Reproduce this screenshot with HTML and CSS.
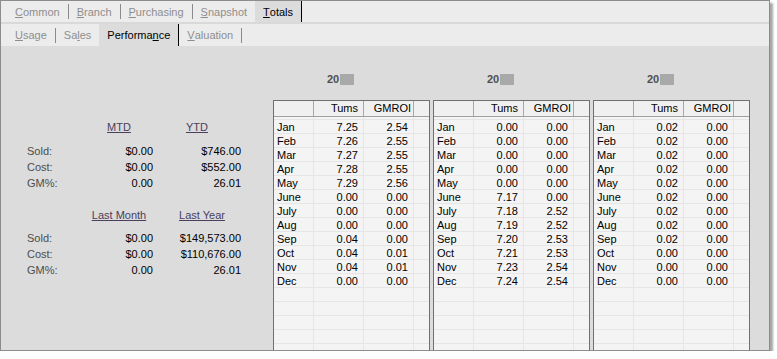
FILE: index.html
```html
<!DOCTYPE html>
<html>

<head>
    <title>Performance Totals</title>
    <meta charset="UTF-8">
    <link rel="stylesheet" href="styles.css">
</head>

<body>
    <div class="window">
        <div class="tabstrip tabstrip-top">
            <span class="tab"><u>C</u>ommon</span><span class="sep"></span>
            <span class="tab"><u>B</u>ranch</span><span class="sep"></span>
            <span class="tab"><u>P</u>urchasing</span><span class="sep"></span>
            <span class="tab"><u>S</u>napshot</span>
            <span class="tab active"><u>T</u>otals</span>
        </div>
        <div class="tabstrip tabstrip-sub">
            <span class="tab"><u>U</u>sage</span><span class="sep"></span>
            <span class="tab">Sa<u>l</u>es</span>
            <span class="tab active">Performa<u>n</u>ce</span>
            <span class="tab"><u>V</u>aluation</span><span class="sep"></span>
        </div>

        <div class="content">
            <div class="summary">
                <div class="stats stats-current">
                    <span></span>
                    <span class="stats-head">MTD</span>
                    <span class="stats-head">YTD</span>
                    <span class="stats-label">Sold:</span><span class="num">$0.00</span><span class="num">$746.00</span>
                    <span class="stats-label">Cost:</span><span class="num">$0.00</span><span class="num">$552.00</span>
                    <span class="stats-label">GM%:</span><span class="num">0.00</span><span class="num">26.01</span>
                </div>
                <div class="stats stats-last">
                    <span></span>
                    <span class="stats-head">Last Month</span>
                    <span class="stats-head head-year">Last Year</span>
                    <span class="stats-label">Sold:</span><span class="num">$0.00</span><span class="num">$149,573.00</span>
                    <span class="stats-label">Cost:</span><span class="num">$0.00</span><span class="num">$110,676.00</span>
                    <span class="stats-label">GM%:</span><span class="num">0.00</span><span class="num">26.01</span>
                </div>
            </div>

            <div class="years">
                <div class="year">
                    <div class="year-label">20<span class="masked"></span></div>
                    <div class="grid">
                        <div class="grid-head">
                            <span></span><span class="num">Tums</span><span class="num head-gmroi">GMROI</span><span></span>
                        </div>
                        <div class="grid-body">
                            <div class="grid-row"><span>Jan</span><span class="num">7.25</span><span class="num">2.54</span></div>
                            <div class="grid-row"><span>Feb</span><span class="num">7.26</span><span class="num">2.55</span></div>
                            <div class="grid-row"><span>Mar</span><span class="num">7.27</span><span class="num">2.55</span></div>
                            <div class="grid-row"><span>Apr</span><span class="num">7.28</span><span class="num">2.55</span></div>
                            <div class="grid-row"><span>May</span><span class="num">7.29</span><span class="num">2.56</span></div>
                            <div class="grid-row"><span>June</span><span class="num">0.00</span><span class="num">0.00</span></div>
                            <div class="grid-row"><span>July</span><span class="num">0.00</span><span class="num">0.00</span></div>
                            <div class="grid-row"><span>Aug</span><span class="num">0.00</span><span class="num">0.00</span></div>
                            <div class="grid-row"><span>Sep</span><span class="num">0.04</span><span class="num">0.00</span></div>
                            <div class="grid-row"><span>Oct</span><span class="num">0.04</span><span class="num">0.01</span></div>
                            <div class="grid-row"><span>Nov</span><span class="num">0.04</span><span class="num">0.01</span></div>
                            <div class="grid-row"><span>Dec</span><span class="num">0.00</span><span class="num">0.00</span></div>
                        </div>
                    </div>
                </div>

                <div class="year">
                    <div class="year-label">20<span class="masked"></span></div>
                    <div class="grid">
                        <div class="grid-head">
                            <span></span><span class="num">Tums</span><span class="num head-gmroi">GMROI</span><span></span>
                        </div>
                        <div class="grid-body">
                            <div class="grid-row"><span>Jan</span><span class="num">0.00</span><span class="num">0.00</span></div>
                            <div class="grid-row"><span>Feb</span><span class="num">0.00</span><span class="num">0.00</span></div>
                            <div class="grid-row"><span>Mar</span><span class="num">0.00</span><span class="num">0.00</span></div>
                            <div class="grid-row"><span>Apr</span><span class="num">0.00</span><span class="num">0.00</span></div>
                            <div class="grid-row"><span>May</span><span class="num">0.00</span><span class="num">0.00</span></div>
                            <div class="grid-row"><span>June</span><span class="num">7.17</span><span class="num">0.00</span></div>
                            <div class="grid-row"><span>July</span><span class="num">7.18</span><span class="num">2.52</span></div>
                            <div class="grid-row"><span>Aug</span><span class="num">7.19</span><span class="num">2.52</span></div>
                            <div class="grid-row"><span>Sep</span><span class="num">7.20</span><span class="num">2.53</span></div>
                            <div class="grid-row"><span>Oct</span><span class="num">7.21</span><span class="num">2.53</span></div>
                            <div class="grid-row"><span>Nov</span><span class="num">7.23</span><span class="num">2.54</span></div>
                            <div class="grid-row"><span>Dec</span><span class="num">7.24</span><span class="num">2.54</span></div>
                        </div>
                    </div>
                </div>

                <div class="year">
                    <div class="year-label">20<span class="masked"></span></div>
                    <div class="grid">
                        <div class="grid-head">
                            <span></span><span class="num">Tums</span><span class="num head-gmroi">GMROI</span><span></span>
                        </div>
                        <div class="grid-body">
                            <div class="grid-row"><span>Jan</span><span class="num">0.02</span><span class="num">0.00</span></div>
                            <div class="grid-row"><span>Feb</span><span class="num">0.02</span><span class="num">0.00</span></div>
                            <div class="grid-row"><span>Mar</span><span class="num">0.02</span><span class="num">0.00</span></div>
                            <div class="grid-row"><span>Apr</span><span class="num">0.02</span><span class="num">0.00</span></div>
                            <div class="grid-row"><span>May</span><span class="num">0.02</span><span class="num">0.00</span></div>
                            <div class="grid-row"><span>June</span><span class="num">0.02</span><span class="num">0.00</span></div>
                            <div class="grid-row"><span>July</span><span class="num">0.02</span><span class="num">0.00</span></div>
                            <div class="grid-row"><span>Aug</span><span class="num">0.02</span><span class="num">0.00</span></div>
                            <div class="grid-row"><span>Sep</span><span class="num">0.02</span><span class="num">0.00</span></div>
                            <div class="grid-row"><span>Oct</span><span class="num">0.00</span><span class="num">0.00</span></div>
                            <div class="grid-row"><span>Nov</span><span class="num">0.00</span><span class="num">0.00</span></div>
                            <div class="grid-row"><span>Dec</span><span class="num">0.00</span><span class="num">0.00</span></div>
                        </div>
                    </div>
                </div>
            </div>
        </div>
    </div>
</body>

</html>
```

FILE: styles.css
```css
body {
    margin: 0;
    padding: 0;
    background-color: #fff;
    font-family: "Liberation Sans", Arial, sans-serif;
    font-size: 11px;
    color: #000;
}

.window {
    box-sizing: border-box;
    width: 770px;
    height: 351px;
    border: 1px solid #8c8c8c;
    background-color: #dcdcdc;
    box-shadow: 3px 3px 2px rgba(0, 0, 0, 0.35);
    display: flex;
    flex-direction: column;
}

/* tab strips */
.tabstrip {
    display: flex;
    background-color: #ececec;
    padding-left: 6px;
}

.tabstrip-top {
    height: 21px;
    border-bottom: 2px solid #d9d9d9;
}

.tabstrip-sub {
    height: 22px;
}

.tab {
    display: flex;
    align-items: center;
    padding: 0 8px;
    color: #8e8e8e;
    white-space: nowrap;
}

.tab.active {
    background-color: #dcdcdc;
    color: #000;
    border-right: 1px solid #000;
}

.sep {
    width: 1px;
    height: 15px;
    align-self: center;
    background-color: #8a8a8a;
}

/* main area */
.content {
    flex: 1;
    display: flex;
    min-height: 0;
}

.summary {
    width: 272px;
    padding: 73px 0 0 26px;
    box-sizing: border-box;
}

.stats {
    display: grid;
    grid-template-columns: 58px 68px 88px;
    line-height: 16px;
}

.stats-current {
    grid-template-rows: 24px repeat(3, 16px);
}

.stats-last {
    margin-top: 16px;
    grid-template-rows: 23px repeat(3, 16px);
}

.stats-head {
    text-align: center;
    color: #4a3f5c;
    text-decoration: underline;
    white-space: nowrap;
}

.stats-head.head-year {
    padding-left: 10px;
}

.stats-label {
    color: #4d4d4d;
}

.num {
    text-align: right;
    white-space: nowrap;
}

/* year grids */
.years {
    display: flex;
    gap: 3px;
    padding-top: 26px;
}

.year {
    width: 157px;
    display: flex;
    flex-direction: column;
}

.year-label {
    height: 14px;
    line-height: 14px;
    margin-bottom: 14px;
    padding-left: 54px;
    font-weight: bold;
    color: #4f4f4f;
    display: flex;
    align-items: center;
}

.masked {
    display: inline-block;
    width: 14px;
    height: 11px;
    margin-left: 1px;
    background-color: #a9a9a9;
}

.grid {
    flex: 1;
    display: flex;
    flex-direction: column;
    border: 1px solid #707070;
    border-bottom: none;
    overflow: hidden;
}

.grid-head {
    display: grid;
    grid-template-columns: 40px 50px 50px 15px;
    height: 16px;
    line-height: 15px;
    background-color: #f0f0f0;
    border-bottom: 1px solid #a0a0a0;
    box-sizing: border-box;
}

.grid-head span {
    box-sizing: border-box;
    border-right: 1px solid #a8a8a8;
    padding-right: 5px;
}

.grid-head span:last-child {
    border-right: none;
}

.grid-head .head-gmroi {
    padding-right: 2px;
}

.grid-body {
    flex: 1;
    padding-top: 3px;
    background-color: #f4f4f4;
    background-image:
        linear-gradient(to bottom, transparent 13px, #e6e6e6 13px),
        linear-gradient(to right, transparent 39px, #e6e6e6 39px, #e6e6e6 40px, transparent 40px,
            transparent 89px, #e6e6e6 89px, #e6e6e6 90px, transparent 90px,
            transparent 139px, #e6e6e6 139px, #e6e6e6 140px, transparent 140px);
    background-size: 100% 14px, 100% 100%;
    background-position: 0 3px, 0 0;
    background-repeat: repeat, no-repeat;
}

.grid-row {
    display: grid;
    grid-template-columns: 40px 50px 50px 15px;
    height: 14px;
    line-height: 14px;
}

.grid-row span:first-child {
    padding-left: 3px;
}

.grid-row .num {
    padding-right: 6px;
}
```
